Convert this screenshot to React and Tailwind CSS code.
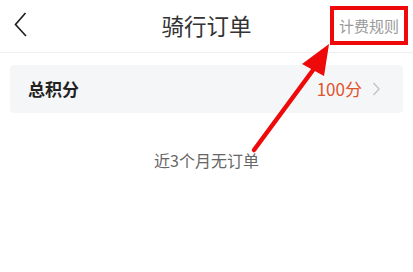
export default function App() {
  const font = { fontFamily: '"Noto Sans CJK SC", "Noto Sans", sans-serif' };
  return (
    <div className="relative w-[413px] h-[272px] bg-white overflow-hidden" style={font}>
      <header className="relative h-[53px] border-b border-[#efefef] flex items-center justify-center">
        <svg className="absolute left-[12px] top-[11px]" width="18" height="28" viewBox="0 0 18 28">
          <path d="M13.5 2 L3.5 13.5 L14 25" fill="none" stroke="#222" strokeWidth="1.7" />
        </svg>
        <span className="text-[22.5px] text-[#333] leading-none -mt-[2px]">骑行订单</span>
        <div className="absolute right-[5px] top-[6px] w-[78px] h-[39px] border-4 border-[#ee0a0a] flex items-center justify-center">
          <span className="text-[15px] text-[#9a9a9a] leading-none">计费规则</span>
        </div>
      </header>

      <div className="mx-[10px] mt-[12px] h-[48px] rounded bg-[#f5f6f8] pl-[18px] pr-[22px] flex items-center justify-between">
        <span className="text-[17px] font-bold text-[#222]">总积分</span>
        <div className="flex items-center gap-[10px]">
          <span className="text-[17px] text-[#e0542c]">100分</span>
          <svg width="9" height="14" viewBox="0 0 9 14">
            <path d="M1.5 1 L7 7 L1.5 13" fill="none" stroke="#c4c4c4" strokeWidth="1.4" />
          </svg>
        </div>
      </div>

      <p className="mt-[35px] text-center text-[16px] text-[#666]">近3个月无订单</p>

      <svg className="absolute left-0 top-0 pointer-events-none" width="413" height="272" viewBox="0 0 413 272">
        <line x1="254" y1="150" x2="316" y2="66" stroke="#ee0a0a" strokeWidth="4.5" strokeLinecap="round" />
        <polygon points="329,44 302,64 324,76" fill="#ee0a0a" />
      </svg>
    </div>
  );
}
